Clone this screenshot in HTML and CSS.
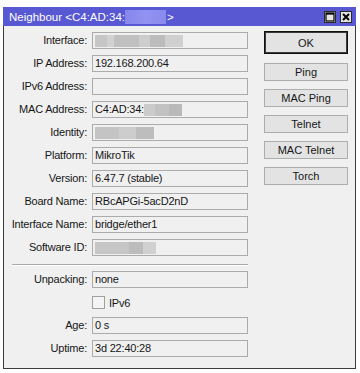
FILE: index.html
```html
<!DOCTYPE html>
<html>
<head>
<meta charset="utf-8">
<link rel="stylesheet" href="styles.css">
</head>
<body>
<div class="window">
  <div class="titlebar">
    <span class="title">Neighbour &lt;C4:AD:34:<span class="title-blur"></span>&gt;</span>
    <div class="tb-btns">
      <span class="tb-btn"><svg width="10" height="10" viewBox="0 0 10 10"><rect x="1" y="1" width="8" height="8" fill="none" stroke="#000" stroke-width="1.2"/><line x1="1" y1="1.8" x2="9" y2="1.8" stroke="#000" stroke-width="1.6"/></svg></span>
      <span class="tb-btn"><svg width="10" height="10" viewBox="0 0 10 10"><path d="M2 2 L8 8 M8 2 L2 8" stroke="#000" stroke-width="2" fill="none"/></svg></span>
    </div>
  </div>
  <div class="body">
    <div class="form">
      <span class="lbl">Interface:</span><div class="field"><span class="blur blur-iface"></span></div>
      <span class="lbl">IP Address:</span><div class="field">192.168.200.64</div>
      <span class="lbl">IPv6 Address:</span><div class="field"></div>
      <span class="lbl">MAC Address:</span><div class="field">C4:AD:34:<span class="blur blur-mac"></span></div>
      <span class="lbl">Identity:</span><div class="field"><span class="blur blur-id"></span></div>
      <span class="lbl">Platform:</span><div class="field">MikroTik</div>
      <span class="lbl">Version:</span><div class="field">6.47.7 (stable)</div>
      <span class="lbl">Board Name:</span><div class="field">RBcAPGi-5acD2nD</div>
      <span class="lbl">Interface Name:</span><div class="field">bridge/ether1</div>
      <span class="lbl">Software ID:</span><div class="field"><span class="blur blur-sw"></span></div>
      <div class="sep"></div>
      <span class="lbl">Unpacking:</span><div class="field">none</div>
      <span class="lbl"></span><div class="check"><span class="box"></span>IPv6</div>
      <span class="lbl">Age:</span><div class="field">0 s</div>
      <span class="lbl">Uptime:</span><div class="field">3d 22:40:28</div>
    </div>
    <div class="buttons">
      <div class="btn btn-ok">OK</div>
      <div class="btn btn-first">Ping</div>
      <div class="btn">MAC Ping</div>
      <div class="btn">Telnet</div>
      <div class="btn">MAC Telnet</div>
      <div class="btn">Torch</div>
    </div>
  </div>
</div>
</body>
</html>
```

FILE: styles.css
```css
* { box-sizing: border-box; }
html, body { margin: 0; }
body {
  padding: 7px 0 0 3px;
  background: #fff;
  font-family: "Liberation Sans", Arial, sans-serif;
  font-size: 11px;
  color: #161616;
  width: 360px;
  height: 373px;
  overflow: hidden;
}
.window {
  width: 353px;
  height: 362px;
  background: #f0f0f0;
  border: 1px solid #3c3c3c;
  border-top: none;
  display: flex;
  flex-direction: column;
}
.titlebar {
  height: 19px;
  background: #5858d2;
  display: flex;
  align-items: center;
  justify-content: space-between;
  padding: 0 4px 0 6px;
  margin: 0 -1px 0 -1px;
}
.title {
  color: #fff;
  font-size: 11.5px;
  display: flex;
  align-items: center;
  white-space: nowrap;
}
.title-blur {
  display: inline-block;
  width: 41px;
  height: 14px;
  background: linear-gradient(90deg, #8686ec, #9292f2 50%, #8a8aee);
  margin: 0 1px 0 0;
}
.tb-btns { display: flex; gap: 4px; }
.tb-btn {
  width: 12px;
  height: 12px;
  background: #e4e4e4;
  border: 1px solid #2a2a2a;
  display: flex;
  align-items: center;
  justify-content: center;
}
.tb-btn svg { display: block; }
.body {
  display: flex;
  padding-top: 6px;
}
.form {
  display: grid;
  grid-template-columns: 83px 156px;
  grid-template-rows: repeat(10, 17px) 3px repeat(4, 17px);
  column-gap: 5px;
  row-gap: 6px;
}
.lbl {
  text-align: right;
  line-height: 17px;
  white-space: nowrap;
  letter-spacing: -0.2px;
}
.field {
  border: 1px solid #ababab;
  background: #f0f0f0;
  line-height: 15px;
  padding-left: 2px;
  display: flex;
  align-items: center;
  white-space: nowrap;
  letter-spacing: -0.2px;
}
.blur {
  display: inline-block;
  height: 12px;
}
.blur-iface {
  width: 88px;
  background: linear-gradient(90deg, #c6c6c6 0 14%, #d2d2d2 14% 22%, #c0c0c0 22% 50%, #cdcdcd 50% 62%, #bcbcbc 62% 80%, #d0d0d0 80%);
}
.blur-mac {
  width: 38px;
  background: linear-gradient(90deg, #cbcbcb 0 30%, #c2c2c2 30% 65%, #b9b9b9 65%);
}
.blur-id {
  width: 59px;
  background: linear-gradient(90deg, #c4c4c4 0 40%, #cdcdcd 40% 70%, #bdbdbd 70%);
}
.blur-sw {
  width: 61px;
  background: linear-gradient(90deg, #c6c6c6 0 55%, #bcbcbc 55% 78%, #d0d0d0 78%);
}
.sep {
  grid-column: 1 / -1;
  height: 2px;
  margin: 2px 0 0 8px;
  border-top: 1px solid #a8a8a8;
  border-bottom: 1px solid #fff;
}
.check {
  display: flex;
  align-items: center;
  gap: 4px;
  letter-spacing: -0.2px;
}
.box {
  width: 13px;
  height: 13px;
  border: 1px solid #a0a0a0;
  background: #f4f4f4;
}
.buttons {
  margin-left: 16px;
  width: 84px;
  display: flex;
  flex-direction: column;
  gap: 8px;
  margin-top: -1px;
}
.btn {
  height: 18px;
  background: #e3e3e3;
  border: 1px solid #adadad;
  display: flex;
  align-items: center;
  justify-content: center;
  white-space: nowrap;
}
.btn-ok {
  height: 23px;
  border: 1px solid #111;
  box-shadow: inset 0 0 0 1px #3a3a3a;
}
.btn-first { margin-top: 1px; }
```
